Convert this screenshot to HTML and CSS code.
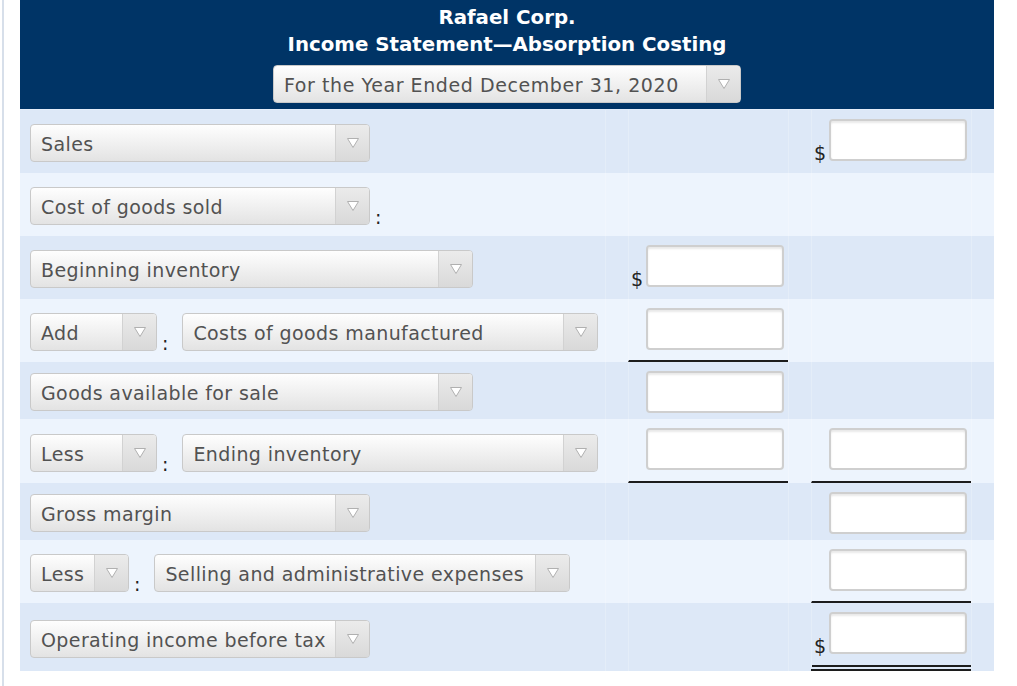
FILE: index.html
```html
<!DOCTYPE html>
<html>
<head>
<meta charset="utf-8">
<link rel="stylesheet" href="styles.css">
</head>
<body>
<div class="page">
  <div class="sheet">
    <div class="hdr">
      <div class="t">Rafael Corp.</div>
      <div class="t">Income Statement—Absorption Costing</div>
      <div class="sel hsel"><span class="st">For the Year Ended December 31, 2020</span><span class="ar"><svg width="14" height="12" viewBox="0 0 14 12"><polygon points="1.5,1.5 12.5,1.5 7,10.5" fill="#fff" stroke="#b0b0b0" stroke-width="1"/></svg></span></div>
    </div>

    <div class="row dk r63">
      <div class="c lab"><div class="sel w340"><span class="st">Sales</span><span class="ar"><svg width="14" height="12" viewBox="0 0 14 12"><polygon points="1.5,1.5 12.5,1.5 7,10.5" fill="#fff" stroke="#b0b0b0" stroke-width="1"/></svg></span></div></div>
      <div class="c"></div>
      <div class="c"></div>
      <div class="c"></div>
      <div class="c inp"><div class="iw"><span class="dol">$</span><span class="box"></span></div></div>
      <div class="c"></div>
    </div>

    <div class="row lt r63">
      <div class="c lab"><div class="grp"><div class="sel w340"><span class="st">Cost of goods sold</span><span class="ar"><svg width="14" height="12" viewBox="0 0 14 12"><polygon points="1.5,1.5 12.5,1.5 7,10.5" fill="#fff" stroke="#b0b0b0" stroke-width="1"/></svg></span></div><span class="colon">:</span></div></div>
      <div class="c"></div>
      <div class="c"></div>
      <div class="c"></div>
      <div class="c"></div>
      <div class="c"></div>
    </div>

    <div class="row dk r63">
      <div class="c lab"><div class="sel w443"><span class="st">Beginning inventory</span><span class="ar"><svg width="14" height="12" viewBox="0 0 14 12"><polygon points="1.5,1.5 12.5,1.5 7,10.5" fill="#fff" stroke="#b0b0b0" stroke-width="1"/></svg></span></div></div>
      <div class="c"></div>
      <div class="c inp"><div class="iw"><span class="dol">$</span><span class="box"></span></div></div>
      <div class="c"></div>
      <div class="c"></div>
      <div class="c"></div>
    </div>

    <div class="row lt r63">
      <div class="c lab"><div class="grp"><div class="sel w127"><span class="st">Add</span><span class="ar"><svg width="14" height="12" viewBox="0 0 14 12"><polygon points="1.5,1.5 12.5,1.5 7,10.5" fill="#fff" stroke="#b0b0b0" stroke-width="1"/></svg></span></div><span class="colon">:</span><div class="sel w416"><span class="st">Costs of goods manufactured</span><span class="ar"><svg width="14" height="12" viewBox="0 0 14 12"><polygon points="1.5,1.5 12.5,1.5 7,10.5" fill="#fff" stroke="#b0b0b0" stroke-width="1"/></svg></span></div></div></div>
      <div class="c"></div>
      <div class="c inp ul"><div class="iw"><span class="box"></span></div></div>
      <div class="c"></div>
      <div class="c"></div>
      <div class="c"></div>
    </div>

    <div class="row dk r57">
      <div class="c lab"><div class="sel w443"><span class="st">Goods available for sale</span><span class="ar"><svg width="14" height="12" viewBox="0 0 14 12"><polygon points="1.5,1.5 12.5,1.5 7,10.5" fill="#fff" stroke="#b0b0b0" stroke-width="1"/></svg></span></div></div>
      <div class="c"></div>
      <div class="c inp"><div class="iw"><span class="box"></span></div></div>
      <div class="c"></div>
      <div class="c"></div>
      <div class="c"></div>
    </div>

    <div class="row lt r64">
      <div class="c lab"><div class="grp"><div class="sel w127"><span class="st">Less</span><span class="ar"><svg width="14" height="12" viewBox="0 0 14 12"><polygon points="1.5,1.5 12.5,1.5 7,10.5" fill="#fff" stroke="#b0b0b0" stroke-width="1"/></svg></span></div><span class="colon">:</span><div class="sel w416"><span class="st">Ending inventory</span><span class="ar"><svg width="14" height="12" viewBox="0 0 14 12"><polygon points="1.5,1.5 12.5,1.5 7,10.5" fill="#fff" stroke="#b0b0b0" stroke-width="1"/></svg></span></div></div></div>
      <div class="c"></div>
      <div class="c inp ul"><div class="iw"><span class="box"></span></div></div>
      <div class="c"></div>
      <div class="c inp ul"><div class="iw"><span class="box"></span></div></div>
      <div class="c"></div>
    </div>

    <div class="row dk r57">
      <div class="c lab"><div class="sel w340"><span class="st">Gross margin</span><span class="ar"><svg width="14" height="12" viewBox="0 0 14 12"><polygon points="1.5,1.5 12.5,1.5 7,10.5" fill="#fff" stroke="#b0b0b0" stroke-width="1"/></svg></span></div></div>
      <div class="c"></div>
      <div class="c"></div>
      <div class="c"></div>
      <div class="c inp"><div class="iw"><span class="box"></span></div></div>
      <div class="c"></div>
    </div>

    <div class="row lt r63">
      <div class="c lab"><div class="grp"><div class="sel w99"><span class="st">Less</span><span class="ar"><svg width="14" height="12" viewBox="0 0 14 12"><polygon points="1.5,1.5 12.5,1.5 7,10.5" fill="#fff" stroke="#b0b0b0" stroke-width="1"/></svg></span></div><span class="colon">:</span><div class="sel w416"><span class="st">Selling and administrative expenses</span><span class="ar"><svg width="14" height="12" viewBox="0 0 14 12"><polygon points="1.5,1.5 12.5,1.5 7,10.5" fill="#fff" stroke="#b0b0b0" stroke-width="1"/></svg></span></div></div></div>
      <div class="c"></div>
      <div class="c"></div>
      <div class="c"></div>
      <div class="c inp ul"><div class="iw"><span class="box"></span></div></div>
      <div class="c"></div>
    </div>

    <div class="row dk r68">
      <div class="c lab"><div class="sel w340"><span class="st">Operating income before tax</span><span class="ar"><svg width="14" height="12" viewBox="0 0 14 12"><polygon points="1.5,1.5 12.5,1.5 7,10.5" fill="#fff" stroke="#b0b0b0" stroke-width="1"/></svg></span></div></div>
      <div class="c"></div>
      <div class="c"></div>
      <div class="c"></div>
      <div class="c inp dul"><div class="iw"><span class="dol">$</span><span class="box"></span></div></div>
      <div class="c"></div>
    </div>
  </div>
</div>
</body>
</html>
```

FILE: styles.css
```css
html, body {
  margin: 0;
  padding: 0;
  background: #fff;
}
body {
  font-family: "DejaVu Sans", Verdana, sans-serif;
}
.page {
  margin-left: 2px;
  border-left: 2px solid #d7dfea;
  padding-left: 16px;
  height: 686px;
  box-sizing: border-box;
}
.sheet {
  width: 974px;
}
.hdr {
  height: 110px;
  background: #003466;
  box-sizing: border-box;
  padding-top: 4px;
  display: flex;
  flex-direction: column;
  align-items: center;
  border-bottom: 1px solid #e6eefa;
}
.hdr .t {
  color: #fff;
  font-weight: bold;
  font-size: 19.8px;
  line-height: 27px;
}
.hsel {
  margin-top: 7px;
  width: 468px;
  height: 36px;
}
.hsel .st {
  letter-spacing: 0.57px;
}
.row {
  display: grid;
  grid-template-columns: 585px 23px 160px 23px 160px 23px;
}
.dk { background: #dde8f7; }
.lt { background: #edf4fd; }
.r57 { height: 57px; }
.r63 { height: 63px; }
.r64 { height: 64px; }
.r68 { height: 68px; }
.c {
  box-sizing: border-box;
}
.c + .c {
  border-left: 1px solid rgba(255, 255, 255, 0.22);
}
.lab {
  display: flex;
  align-items: center;
  padding: 3px 0 0 10px;
}
.grp {
  display: flex;
  align-items: flex-end;
}
.sel {
  box-sizing: border-box;
  height: 38px;
  display: flex;
  align-items: stretch;
  border: 1px solid #c9c9c9;
  border-radius: 4px;
  background: linear-gradient(#fefefe, #e3e3e3);
  overflow: hidden;
}
.w99 { width: 99px; }
.w127 { width: 127px; }
.w340 { width: 340px; }
.w416 { width: 416px; }
.w443 { width: 443px; }
.st {
  flex: 1;
  display: flex;
  align-items: center;
  padding: 2px 0 0 10px;
  color: #525252;
  font-size: 19px;
  letter-spacing: 0.4px;
  white-space: nowrap;
}
.ar {
  width: 33px;
  flex: none;
  border-left: 1px solid #d2d2d2;
  background: linear-gradient(#ebebeb, #d9d9d9);
  display: flex;
  align-items: center;
  justify-content: center;
}
.colon {
  font-size: 19px;
  line-height: 19px;
  color: #222;
  margin: 0 14px -2px 5px;
}
.inp {
  display: flex;
  justify-content: flex-end;
  align-items: flex-start;
  padding-right: 4px;
}
.iw {
  margin-top: 9px;
  display: flex;
  align-items: flex-end;
}
.dol {
  font-size: 19px;
  line-height: 19px;
  color: #222;
  margin-right: 3px;
  margin-bottom: -2px;
}
.box {
  display: block;
  box-sizing: border-box;
  width: 138px;
  height: 42px;
  background: #fff;
  border: 2px solid #cfcfcf;
  border-radius: 4px;
  box-shadow: inset 0 2px 2px rgba(0, 0, 0, 0.09);
}
.ul {
  border-bottom: 2px solid #1c1c1c;
}
.dul {
  border-bottom: 6px double #1c1c1c;
}
```
